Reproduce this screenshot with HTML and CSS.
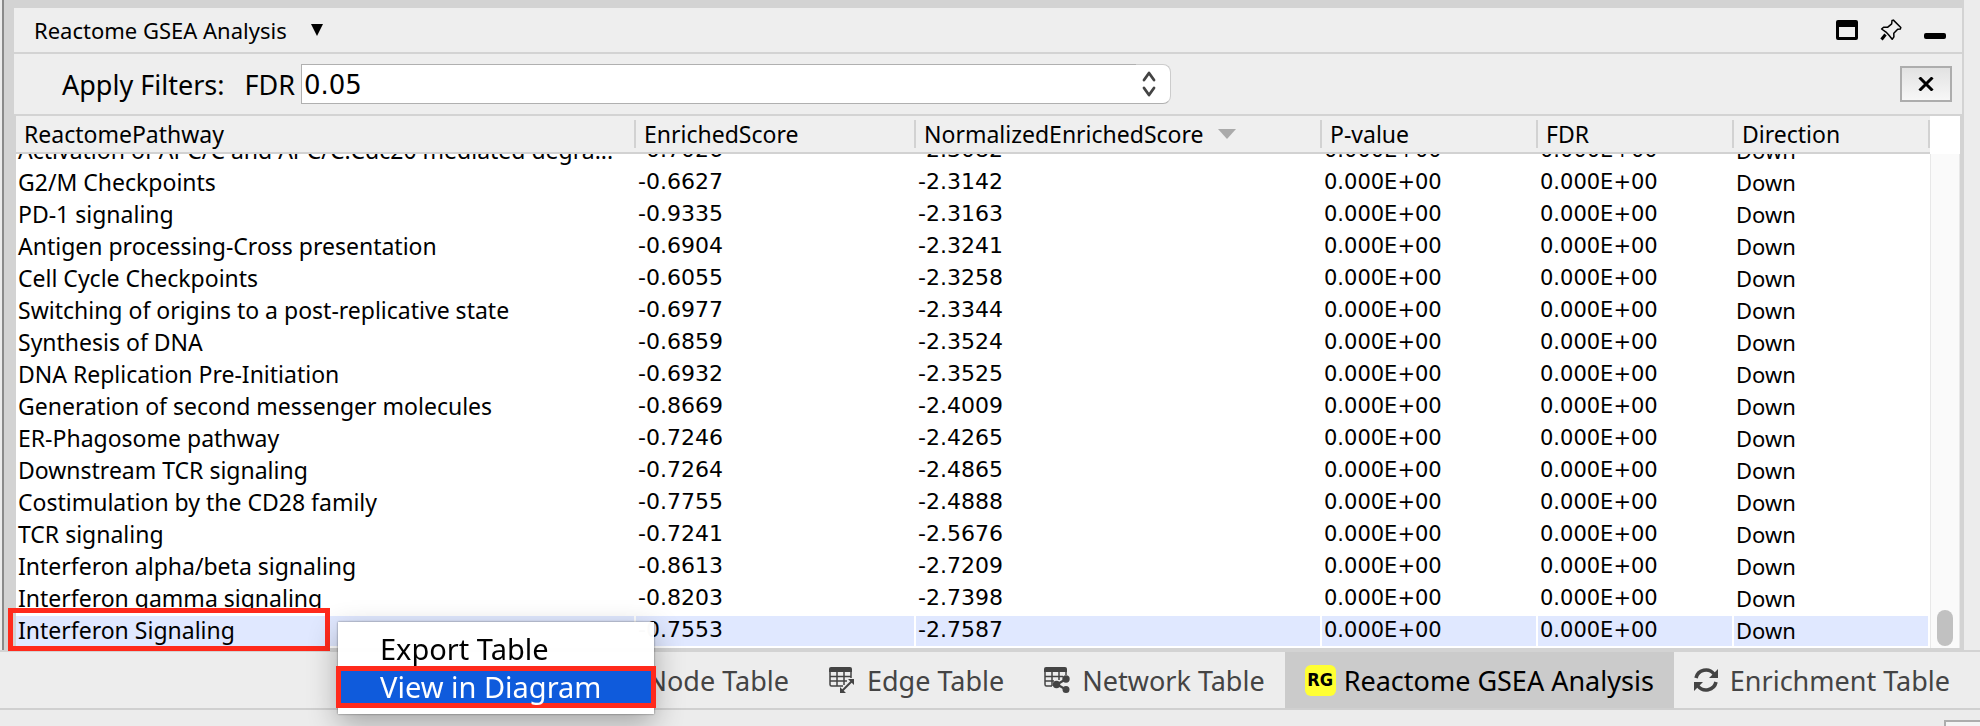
FILE: index.html
```html
<!DOCTYPE html>
<html lang="en">
<head>
<meta charset="utf-8">
<title>Reactome GSEA Analysis</title>
<link rel="stylesheet" href="styles.css">
</head>
<body>
<main class="panel">
  <header class="titlebar">
    <button class="title-button" type="button">Reactome GSEA Analysis
      <svg width="12" height="12" viewBox="0 0 12 12"><path d="M0 0h12L6 12z"/></svg>
    </button>
    <div class="window-buttons">
      <button type="button" aria-label="Float"><svg width="22" height="20" viewBox="0 0 22 20"><path fill-rule="evenodd" d="M2 0h18a2 2 0 0 1 2 2v16a2 2 0 0 1-2 2H2a2 2 0 0 1-2-2V2a2 2 0 0 1 2-2zM3 7v10h16V7z"/></svg></button>
      <button type="button" aria-label="Pin"><svg width="22" height="22" viewBox="0 0 22 22" fill="none" stroke="#000" stroke-linejoin="round"><path stroke-width="1.5" d="M12 1.5l1.4-.4 7.4 7.4-.5 1.6-2.6.1-3.9 4.1.1 3.6-1.7 2.4-3.2-4-3-3.2L1.600 10l2-1.800 3.900.1L11.700 4.800z"/><path stroke-width="3" d="M5.500 15.500L1.500 20.500"/></svg></button>
      <button type="button" aria-label="Minimize"><svg width="22" height="20" viewBox="0 0 22 20"><rect y="13" width="22" height="6" rx="2"/></svg></button>
    </div>
  </header>

  <section class="filters">
    <label for="fdr"><span>Apply Filters:</span><span>FDR</span></label>
    <div class="spinner">
      <input id="fdr" type="text" value="0.05">
      <button type="button" aria-label="Step value"><svg width="14" height="26" viewBox="0 0 14 26" fill="none" stroke="#444" stroke-width="2.800" stroke-linecap="round" stroke-linejoin="round"><path d="M2 9L7 2l5 7M2 17l5 7 5-7"/></svg></button>
    </div>
    <button class="close" type="button" aria-label="Close"><svg width="16" height="14" viewBox="0 0 16 14" stroke="#000" stroke-width="3"><path d="M1.500 .5l13 13M14.500 .5l-13 13"/></svg></button>
  </section>

  <section class="results">
    <div class="scroller">
      <table>
        <colgroup><col><col class="c-score"><col class="c-nes"><col class="c-p"><col class="c-fdr"><col class="c-dir"></colgroup>
        <thead><tr>
          <th><div>ReactomePathway</div></th><th><div>EnrichedScore</div></th>
          <th><div>NormalizedEnrichedScore<svg class="sort" width="18" height="10" viewBox="0 0 18 10"><path fill="#aaa" d="M0 0h18L9 10z"/></svg></div></th>
          <th><div>P-value</div></th><th><div>FDR</div></th><th><div>Direction</div></th>
        </tr></thead>
        <tbody>
          <tr><td>Activation of APC/C and APC/C:Cdc20 mediated degra...</td><td>-0.7026</td><td>-2.3082</td><td>0.000E+00</td><td>0.000E+00</td><td>Down</td></tr>
          <tr><td>G2/M Checkpoints</td><td>-0.6627</td><td>-2.3142</td><td>0.000E+00</td><td>0.000E+00</td><td>Down</td></tr>
          <tr><td>PD-1 signaling</td><td>-0.9335</td><td>-2.3163</td><td>0.000E+00</td><td>0.000E+00</td><td>Down</td></tr>
          <tr><td>Antigen processing-Cross presentation</td><td>-0.6904</td><td>-2.3241</td><td>0.000E+00</td><td>0.000E+00</td><td>Down</td></tr>
          <tr><td>Cell Cycle Checkpoints</td><td>-0.6055</td><td>-2.3258</td><td>0.000E+00</td><td>0.000E+00</td><td>Down</td></tr>
          <tr><td>Switching of origins to a post-replicative state</td><td>-0.6977</td><td>-2.3344</td><td>0.000E+00</td><td>0.000E+00</td><td>Down</td></tr>
          <tr><td>Synthesis of DNA</td><td>-0.6859</td><td>-2.3524</td><td>0.000E+00</td><td>0.000E+00</td><td>Down</td></tr>
          <tr><td>DNA Replication Pre-Initiation</td><td>-0.6932</td><td>-2.3525</td><td>0.000E+00</td><td>0.000E+00</td><td>Down</td></tr>
          <tr><td>Generation of second messenger molecules</td><td>-0.8669</td><td>-2.4009</td><td>0.000E+00</td><td>0.000E+00</td><td>Down</td></tr>
          <tr><td>ER-Phagosome pathway</td><td>-0.7246</td><td>-2.4265</td><td>0.000E+00</td><td>0.000E+00</td><td>Down</td></tr>
          <tr><td>Downstream TCR signaling</td><td>-0.7264</td><td>-2.4865</td><td>0.000E+00</td><td>0.000E+00</td><td>Down</td></tr>
          <tr><td>Costimulation by the CD28 family</td><td>-0.7755</td><td>-2.4888</td><td>0.000E+00</td><td>0.000E+00</td><td>Down</td></tr>
          <tr><td>TCR signaling</td><td>-0.7241</td><td>-2.5676</td><td>0.000E+00</td><td>0.000E+00</td><td>Down</td></tr>
          <tr><td>Interferon alpha/beta signaling</td><td>-0.8613</td><td>-2.7209</td><td>0.000E+00</td><td>0.000E+00</td><td>Down</td></tr>
          <tr><td>Interferon gamma signaling</td><td>-0.8203</td><td>-2.7398</td><td>0.000E+00</td><td>0.000E+00</td><td>Down</td></tr>
          <tr class="selected"><td>Interferon Signaling</td><td>-0.7553</td><td>-2.7587</td><td>0.000E+00</td><td>0.000E+00</td><td>Down</td></tr>
        </tbody>
      </table>
    </div>
    <div class="scrollbar"><div class="track"><div class="thumb"></div></div></div>
  </section>
</main>

<nav class="tabs">
  <button type="button"><svg width="26" height="26" viewBox="0 0 26 26"><path fill="none" stroke="#444" stroke-width="1.500" d="M1 4v15h16M1 9h21M1 14h21M8 4v15M15 4v15M22 4v11"/><path fill="#444" d="M0 5V2a2 2 0 0 1 2-2h19a2 2 0 0 1 2 2v3z"/><circle cx="19" cy="20" r="6" fill="#444"/></svg>Node Table</button>
  <button type="button"><svg width="26" height="26" viewBox="0 0 26 26"><path fill="none" stroke="#444" stroke-width="1.500" d="M1 4v13.500q0 1.500 1.500 1.500H14M1 9.500h21M1 14h17M8 4v15M15 4v14M22 4v7"/><path fill="#444" d="M0 5V2a2 2 0 0 1 2-2h19a2 2 0 0 1 2 2v3z"/><path stroke="#444" stroke-width="2" d="M13 24L24 13"/><path fill="#444" d="M19 12h6v6zM11 20v6h6z"/></svg>Edge Table</button>
  <button type="button"><svg width="26" height="26" viewBox="0 0 26 26"><path fill="none" stroke="#444" stroke-width="1.500" d="M1 4v13.500q0 1.500 1.500 1.500H8M1 9.500h18M1 14h9M8 4v15M15 4v9M22 4v4"/><path fill="#444" d="M0 5V2a2 2 0 0 1 2-2h19a2 2 0 0 1 2 2v3z"/><path fill="none" stroke="#444" stroke-width="2.200" d="M22 12l-9 5.500 9 5"/><g fill="#444"><circle cx="22" cy="12" r="3.700"/><circle cx="12.500" cy="17.500" r="3.700"/><circle cx="22" cy="22.500" r="3.500"/></g></svg>Network Table</button>
  <button class="active" type="button"><span class="badge">RG</span>Reactome GSEA Analysis</button>
  <button type="button"><svg width="24" height="24" viewBox="0 0 24 24"><path fill="none" stroke="#444" stroke-width="3.600" d="M2 10A10.200 10.200 0 0 1 20 6M22 14A10.200 10.200 0 0 1 4 18"/><path fill="#444" d="M24 1v9h-9zM0 23v-9h9z"/></svg>Enrichment Table</button>
</nav>
<footer class="status"><button type="button" aria-label="Memory"></button></footer>

<div class="highlight"></div>
<div class="menu" role="menu">
  <button type="button" role="menuitem">Export Table</button>
  <button class="current" type="button" role="menuitem">View in Diagram</button>
</div>
</body>
</html>
```

FILE: styles.css
```css
* { box-sizing: border-box; }

body {
  position: relative;
  display: flex;
  flex-direction: column;
  height: 100vh;
  margin: 0;
  overflow: hidden;
  background: #ececec;
  color: #000;
  font-family: "Noto Sans", "Open Sans", sans-serif;
  font-size: 22px;
}

button, input { margin: 0; padding: 0; border: 0; background: none; color: inherit; font: inherit; }
svg { display: block; flex: none; }

.panel {
  display: flex;
  flex: 1;
  flex-direction: column;
  min-height: 0;
  margin: 0 16px 0 2px;
  padding: 8px 2px 2px 10px;
  border-left: 2px solid #8a8a8a;
  background: #d3d3d3;
}

.titlebar {
  display: flex;
  align-items: center;
  justify-content: space-between;
  height: 44px;
  margin-bottom: 2px;
  padding: 0 16px 0 20px;
  background: #eee;
}
.title-button { display: flex; align-items: center; gap: 24px; }
.window-buttons { display: flex; align-items: center; gap: 22px; }

.filters {
  display: flex;
  align-items: center;
  height: 60px;
  margin-bottom: 2px;
  padding: 0 10px 0 48px;
  background: #eee;
  font-size: 27px;
}
.filters label { display: flex; gap: 20px; margin-right: 6px; }
.spinner { display: flex; flex: 0 1 870px; align-items: center; min-width: 0; }
.spinner input {
  flex: 1;
  min-width: 0;
  height: 40px;
  padding: 2px 2px 0;
  border: 1px solid #b0b0b0;
  border-right: 0;
  background: #fff;
  font-family: "DejaVu Sans", sans-serif;
  font-size: 26px;
}
.spinner button {
  width: 35px;
  height: 40px;
  padding-left: 6px;
  border: 1px solid #ccc;
  border-left: 0;
  border-bottom-color: #b0b0b0;
  border-radius: 0 8px 8px 0;
  background: #fff;
}
.close {
  display: grid;
  place-items: center;
  width: 52px;
  height: 36px;
  margin-left: auto;
  border: 2px solid #adadad;
  background: linear-gradient(#e2e2e2, #f7f7f7);
}

.results { display: flex; flex: 1; min-height: 0; margin: 0 2px; background: #fff; }
/* reversed column: the list opens scrolled to its last row */
.scroller {
  display: flex;
  flex: 1;
  flex-direction: column-reverse;
  min-width: 0;
  overflow-y: auto;
  scrollbar-width: none;
}
table { width: 100%; table-layout: fixed; border-collapse: separate; border-spacing: 0; flex: none; }
.c-score { width: 280px; }
.c-nes { width: 406px; }
.c-p { width: 216px; }
.c-fdr, .c-dir { width: 196px; }

th {
  position: sticky;
  top: 0;
  height: 38px;
  padding: 0;
  border-bottom: 2px solid #d2d2d2;
  background: #efefef;
  font-size: 23px;
  font-weight: 400;
  text-align: left;
}
th div {
  display: flex;
  align-items: center;
  gap: 14px;
  height: 28px;
  padding-left: 8px;
  border-right: 2px solid #d2d2d2;
  line-height: 26px;
}
td {
  height: 32px;
  padding: 0 8px 2px 2px;
  overflow: hidden;
  border-right: 2px solid #fff;
  border-bottom: 2px solid #fff;
  line-height: 28px;
  text-overflow: ellipsis;
  white-space: nowrap;
}
td:first-child { font-size: 23px; }
td:nth-child(2), td:nth-child(3) { font-family: "DejaVu Sans", sans-serif; }
td:nth-child(4), td:nth-child(5) { font-family: "DejaVu Sans", sans-serif; font-size: 21px; }
.selected td { background: #e0e8ff; }

.scrollbar { display: flex; width: 30px; padding-top: 38px; }
.track {
  display: flex;
  flex: 1;
  align-items: flex-end;
  justify-content: center;
  padding-bottom: 2px;
  border: solid #e8e8e8;
  border-width: 0 1px;
  background: #fafafa;
}
.thumb { width: 16px; height: 36px; border-radius: 8px; background: #c1c1c1; }

.tabs {
  display: flex;
  flex: none;
  justify-content: flex-end;
  height: 60px;
  padding-right: 10px;
  border-top: 2px solid #d3d3d3;
  border-bottom: 2px solid #d0d0d0;
  background: #ededed;
  color: #444;
  font-size: 27px;
}
.tabs button { display: flex; align-items: center; gap: 12px; padding: 0 20px; white-space: nowrap; }
.tabs .active { gap: 8px; background: #cbcbcb; color: #000; }
.badge {
  width: 31px;
  height: 31px;
  border-radius: 6px;
  background: #ffff33;
  font-family: "DejaVu Sans Condensed", "DejaVu Sans", sans-serif;
  font-size: 18px;
  font-weight: 700;
  line-height: 30px;
  text-align: center;
}

.status { display: flex; flex: none; justify-content: flex-end; height: 16px; padding-top: 10px; overflow: hidden; }
.status button { width: 36px; height: 30px; border: 2px solid #adadad; border-right: 0; background: #f5f5f5; }

.highlight {
  position: absolute;
  bottom: 75px;
  left: 8px;
  width: 322px;
  height: 43px;
  border: 5px solid #ff2a1c;
}
.menu {
  position: absolute;
  bottom: 12px;
  left: 338px;
  display: flex;
  flex-direction: column;
  width: 316px;
  padding: 8px 0 6px;
  background: rgba(255, 255, 255, .98);
  box-shadow: 0 0 2px rgba(0, 0, 0, .5), 0 10px 28px rgba(0, 0, 0, .3);
  font-size: 29px;
}
.menu button { height: 36px; padding-left: 42px; line-height: 38px; text-align: left; }
.menu .current {
  height: 42px;
  margin: 0 -2px;
  padding-left: 39px;
  border: 5px solid #ff2a1c;
  background: #0f5bdc;
  color: #fff;
  line-height: 32px;
}
```
